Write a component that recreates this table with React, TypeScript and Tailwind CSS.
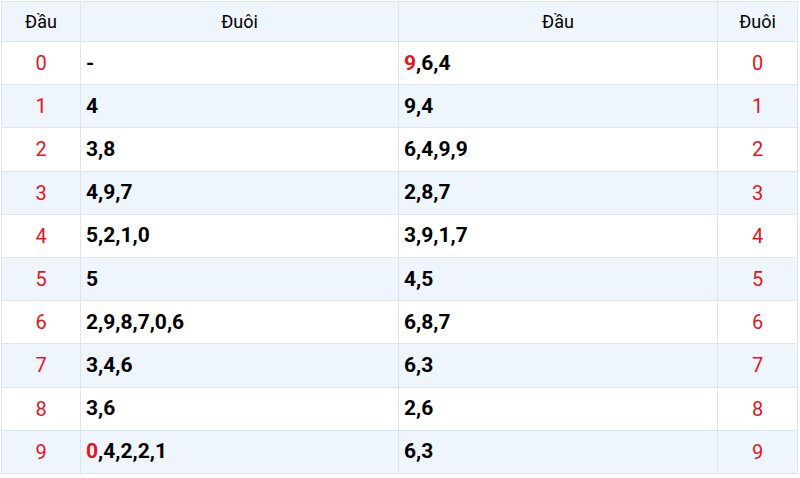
import React from "react";

const rows: { d: string; tail: string; tailRed?: boolean; head: string; headRed?: boolean }[] = [
  { d: "0", tail: "-", head: "9,6,4", headRed: true },
  { d: "1", tail: "4", head: "9,4" },
  { d: "2", tail: "3,8", head: "6,4,9,9" },
  { d: "3", tail: "4,9,7", head: "2,8,7" },
  { d: "4", tail: "5,2,1,0", head: "3,9,1,7" },
  { d: "5", tail: "5", head: "4,5" },
  { d: "6", tail: "2,9,8,7,0,6", head: "6,8,7" },
  { d: "7", tail: "3,4,6", head: "6,3" },
  { d: "8", tail: "3,6", head: "2,6" },
  { d: "9", tail: "0,4,2,2,1", tailRed: true, head: "6,3" },
];

function Val({ v, red }: { v: string; red?: boolean }) {
  if (red) {
    return (
      <>
        <span className="text-[#e5141e]">{v[0]}</span>
        {v.slice(1)}
      </>
    );
  }
  return <>{v}</>;
}

export default function App() {
  return (
    <div className="w-[800px] h-[478px] bg-white pt-[1px] pl-[1px]" style={{ fontFamily: "Roboto, 'Liberation Sans', sans-serif" }}>
      <table className="w-[796px] border-collapse table-fixed">
        <colgroup>
          <col className="w-[79px]" />
          <col className="w-[318px]" />
          <col className="w-[319px]" />
          <col className="w-[80px]" />
        </colgroup>
        <thead>
          <tr className="h-[40px] bg-[#eef5fd]">
            <th className="border border-[#dfe5ec] font-normal text-[18px] leading-none text-black text-center">Đầu</th>
            <th className="border border-[#dfe5ec] font-normal text-[18px] leading-none text-black text-center">Đuôi</th>
            <th className="border border-[#dfe5ec] font-normal text-[18px] leading-none text-black text-center">Đầu</th>
            <th className="border border-[#dfe5ec] font-normal text-[18px] leading-none text-black text-center">Đuôi</th>
          </tr>
        </thead>
        <tbody>
          {rows.map((r, i) => (
            <tr key={r.d} className={i % 2 === 1 ? "h-[43.2px] bg-[#eef5fd]" : "h-[43.2px] bg-white"}>
              <td className="border border-[#dfe5ec] text-center text-[20px] leading-none text-[#e5141e]">{r.d}</td>
              <td className="border border-[#dfe5ec] px-[5px] text-[21px] leading-none font-bold text-black">
                <Val v={r.tail} red={r.tailRed} />
              </td>
              <td className="border border-[#dfe5ec] px-[5px] text-[21px] leading-none font-bold text-black">
                <Val v={r.head} red={r.headRed} />
              </td>
              <td className="border border-[#dfe5ec] text-center text-[20px] leading-none text-[#e5141e]">{r.d}</td>
            </tr>
          ))}
        </tbody>
      </table>
    </div>
  );
}
